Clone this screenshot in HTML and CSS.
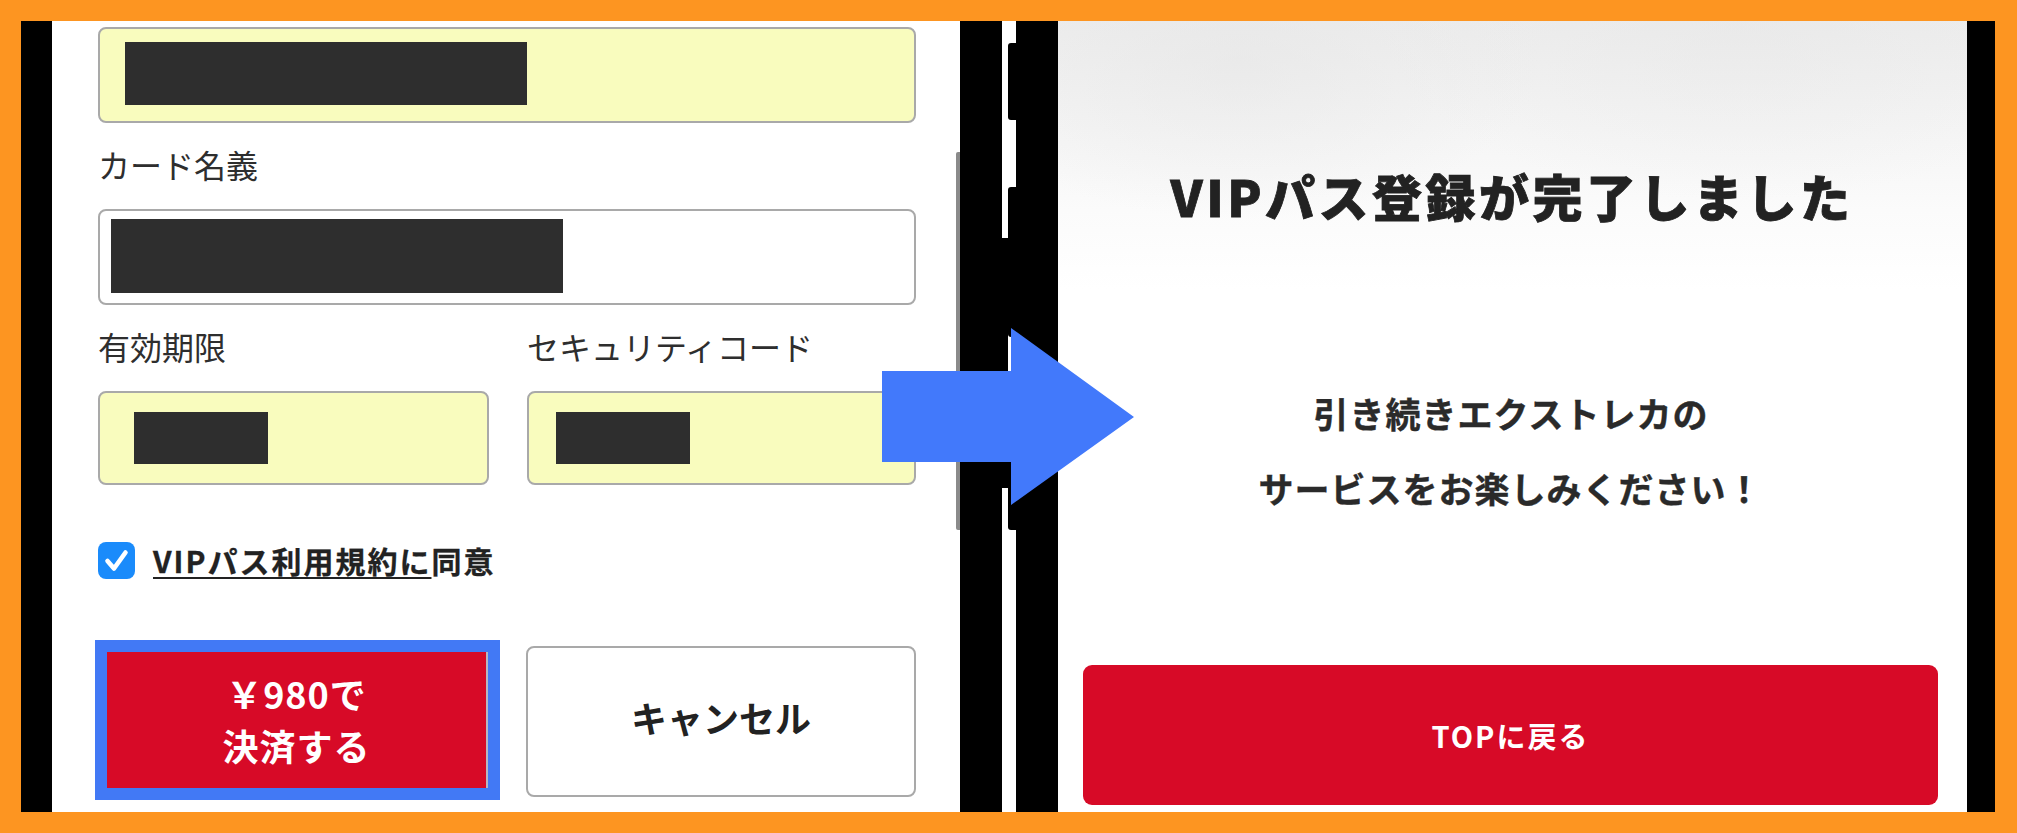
FILE: index.html
```html
<!DOCTYPE html>
<html lang="ja">
<head>
<meta charset="utf-8">
<title>VIPパス登録</title>
<link rel="stylesheet" href="styles.css">
</head>
<body>
<div class="frame">
  <div class="bezel bezel-l1"></div>
  <div class="screen-left">
    <div class="field yellow f1"><span class="redact r1"></span></div>
    <div class="label">カード名義</div>
    <div class="field white f2"><span class="redact r2"></span></div>
    <div class="pair">
      <div class="label">有効期限</div>
      <div class="label">セキュリティコード</div>
      <div class="field yellow small fs1"><span class="redact rs"></span></div>
      <div class="field yellow small fs2"><span class="redact rs"></span></div>
    </div>
    <div class="agree">
      <span class="check">
        <svg viewBox="0 0 37 37" width="37" height="37"><polyline points="9.5,19 16,26.5 27.5,10.5" fill="none" stroke="#fff" stroke-width="4.6" stroke-linecap="round" stroke-linejoin="round"/></svg>
      </span>
      <span class="agree-text"><span class="link">VIPパス利用規約に</span>同意</span>
    </div>
    <div class="actions">
      <div class="pay-cell"><button class="pay">￥980で<br>決済する</button></div>
      <button class="cancel">キャンセル</button>
    </div>
    <div class="scrollbar"></div>
  </div>
  <div class="bezel bezel-r1"><span class="side-btn"></span></div>
  <div class="gap"></div>
  <div class="bezel bezel-l2">
    <span class="notch n1"></span>
    <span class="notch n2"></span>
    <span class="notch n3"></span>
  </div>
  <div class="screen-right">
    <h1 class="title">VIPパス登録が完了しました</h1>
    <p class="message">引き続きエクストレカの<br>サービスをお楽しみください！</p>
    <button class="top-btn">TOPに戻る</button>
  </div>
  <div class="bezel bezel-r2"></div>
  <svg class="arrow" viewBox="0 0 252 177" width="252" height="177"><polygon points="0,43 129,43 129,0 252,89 129,177 129,134 0,134" fill="#4279fb"/></svg>
</div>
</body>
</html>
```

FILE: styles.css
```css
* { box-sizing: border-box; }
html, body { margin: 0; padding: 0; }
body {
  font-family: "Noto Sans CJK JP", "Noto Sans", sans-serif;
  color: #2a2a2a;
  background: #fd9521;
}
.frame {
  position: relative;
  width: 2017px;
  height: 833px;
  padding: 21px 22px 21px 21px;
  background: #fd9521;
  display: flex;
  overflow: hidden;
}
.bezel { background: #000; position: relative; flex: none; }
.bezel-l1 { width: 31px; }
.bezel-r1 { width: 42px; }
.bezel-l2 { width: 42px; }
.bezel-r2 { width: 28px; }
.gap { width: 14px; background: #fff; flex: none; }

.side-btn {
  position: absolute;
  right: -6px;
  top: 217px;
  width: 6px;
  height: 250px;
  background: #000;
}
.notch {
  position: absolute;
  left: -8px;
  width: 8px;
  background: #000;
  border-radius: 3px 0 0 3px;
}
.n1 { top: 22px; height: 77px; }
.n2 { top: 166px; height: 150px; }
.n3 { top: 380px; height: 129px; }

/* left screen */
.screen-left {
  position: relative;
  width: 908px;
  flex: none;
  background: #fff;
  padding: 6px 44px 0 46px;
}
.field {
  height: 96px;
  border: 2px solid #a9a9a9;
  border-radius: 8px;
  display: flex;
  align-items: flex-start;
}
.yellow { background: #f9fcbe; }
.white { background: #fff; }
.redact { display: block; background: #2e2e2e; }
.f1 { padding: 13px 0 0 25px; }
.r1 { width: 402px; height: 63px; }
.f2 { padding: 8px 0 0 11px; }
.r2 { width: 452px; height: 74px; }
.small { height: 94px; }
.fs1 { padding: 19px 0 0 34px; }
.fs2 { padding: 19px 0 0 27px; }
.rs { width: 134px; height: 52px; }

.label {
  font-size: 32px;
  line-height: 32px;
  color: #2e2e2e;
  margin: 25px 0 29px 0;
  white-space: nowrap;
}
.pair {
  display: grid;
  grid-template-columns: 391px 389px;
  column-gap: 38px;
}

.agree {
  display: flex;
  align-items: center;
  gap: 18px;
  margin-top: 57px;
  height: 37px;
}
.check {
  width: 37px;
  height: 37px;
  border-radius: 8px;
  background: #1a8bfb;
  display: flex;
  flex: none;
}
.agree-text {
  font-size: 30px;
  font-weight: 700;
  letter-spacing: 2px;
  line-height: 37px;
  color: #222;
  white-space: nowrap;
  -webkit-text-stroke: 0.3px #222;
}
.link {
  text-decoration: underline;
  text-decoration-thickness: 2px;
  text-underline-offset: 4px;
}

.actions {
  display: grid;
  grid-template-columns: 391px 390px;
  column-gap: 37px;
  margin-top: 67px;
  align-items: start;
}
.pay-cell { padding: 6px 1px 0 9px; }
button {
  font-family: inherit;
  cursor: pointer;
  padding: 0;
}
.pay {
  display: block;
  width: 100%;
  height: 136px;
  background: #d70a27;
  border: 0;
  border-right: 2px solid #b7b7c0;
  outline: 12px solid #4279f5;
  color: #fff;
  font-size: 36px;
  font-weight: 700;
  line-height: 52px;
  letter-spacing: 1px;
  padding-bottom: 2px;
}
.cancel {
  height: 151px;
  background: #fff;
  border: 2px solid #a9a9a9;
  border-radius: 8px;
  color: #222;
  font-size: 36px;
  font-weight: 700;
  line-height: 1;
  padding-bottom: 10px;
}
.scrollbar {
  position: absolute;
  right: 0;
  top: 131px;
  width: 4px;
  height: 378px;
  background: #8a8a8a;
  border-radius: 2px 0 0 2px;
}

/* right screen */
.screen-right {
  width: 909px;
  flex: none;
  display: flex;
  flex-direction: column;
  align-items: center;
  padding: 149px 29px 7px 25px;
  background:
    radial-gradient(ellipse 300px 160px at 20% 5%, rgba(228,228,228,0.5), rgba(255,255,255,0) 100%),
    radial-gradient(ellipse 360px 180px at 75% 0%, rgba(230,230,230,0.5), rgba(255,255,255,0) 100%),
    linear-gradient(180deg, #ededed 0%, #f4f4f4 12%, #fbfbfb 24%, #ffffff 34%);
}
.title {
  margin: 0;
  font-size: 50px;
  line-height: 50px;
  font-weight: 900;
  letter-spacing: 3.5px;
  color: #222;
  white-space: nowrap;
  text-indent: 3px;
  -webkit-text-stroke: 0.8px #222;
}
.message {
  margin: 155px 0 0 0;
  font-size: 35px;
  line-height: 75px;
  font-weight: 700;
  letter-spacing: 1px;
  text-align: center;
  color: #2a2a2a;
  text-indent: 1px;
  -webkit-text-stroke: 0.4px #2a2a2a;
}
.top-btn {
  margin-top: auto;
  width: 100%;
  height: 140px;
  border: 0;
  border-radius: 9px;
  background: #d70a27;
  color: #fff;
  font-size: 29px;
  font-weight: 700;
  letter-spacing: 2px;
}

.arrow {
  position: absolute;
  left: 882px;
  top: 328px;
  display: block;
}
```
